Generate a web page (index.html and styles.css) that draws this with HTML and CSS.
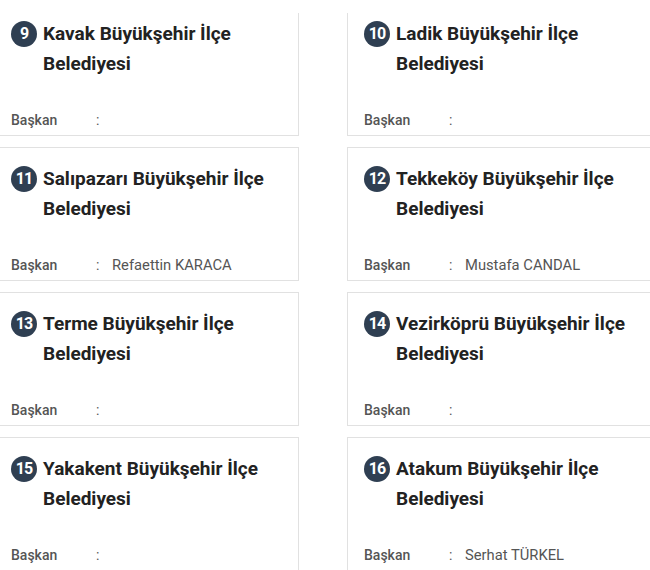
FILE: index.html
```html
<!DOCTYPE html>
<html lang="tr">
<head>
<meta charset="utf-8">
<link rel="stylesheet" href="styles.css">
</head>
<body>
<div class="top-cover"></div>
<div class="grid">
  <div class="card">
    <div class="title"><span class="badge">9</span><span class="name">Kavak Büyükşehir İlçe Belediyesi</span></div>
    <div class="meta"><span class="label">Başkan</span><span class="colon">:</span><span class="value"></span></div>
  </div>
  <div class="card">
    <div class="title"><span class="badge">10</span><span class="name">Ladik Büyükşehir İlçe Belediyesi</span></div>
    <div class="meta"><span class="label">Başkan</span><span class="colon">:</span><span class="value"></span></div>
  </div>
  <div class="card">
    <div class="title"><span class="badge">11</span><span class="name">Salıpazarı Büyükşehir İlçe Belediyesi</span></div>
    <div class="meta"><span class="label">Başkan</span><span class="colon">:</span><span class="value">Refaettin KARACA</span></div>
  </div>
  <div class="card">
    <div class="title"><span class="badge">12</span><span class="name">Tekkeköy Büyükşehir İlçe Belediyesi</span></div>
    <div class="meta"><span class="label">Başkan</span><span class="colon">:</span><span class="value">Mustafa CANDAL</span></div>
  </div>
  <div class="card">
    <div class="title"><span class="badge">13</span><span class="name">Terme Büyükşehir İlçe Belediyesi</span></div>
    <div class="meta"><span class="label">Başkan</span><span class="colon">:</span><span class="value"></span></div>
  </div>
  <div class="card">
    <div class="title"><span class="badge">14</span><span class="name">Vezirköprü Büyükşehir İlçe Belediyesi</span></div>
    <div class="meta"><span class="label">Başkan</span><span class="colon">:</span><span class="value"></span></div>
  </div>
  <div class="card">
    <div class="title"><span class="badge">15</span><span class="name">Yakakent Büyükşehir İlçe Belediyesi</span></div>
    <div class="meta"><span class="label">Başkan</span><span class="colon">:</span><span class="value"></span></div>
  </div>
  <div class="card">
    <div class="title"><span class="badge">16</span><span class="name">Atakum Büyükşehir İlçe Belediyesi</span></div>
    <div class="meta"><span class="label">Başkan</span><span class="colon">:</span><span class="value">Serhat TÜRKEL</span></div>
  </div>
</div>
</body>
</html>
```
FILE: styles.css
```css
html, body {
  margin: 0;
  padding: 0;
  background: #fff;
  overflow: hidden;
}
body {
  font-family: Roboto, "Liberation Sans", sans-serif;
}
.top-cover {
  position: fixed;
  top: 0;
  left: 0;
  right: 0;
  height: 13px;
  background: #fff;
  z-index: 2;
}
.grid {
  display: grid;
  grid-template-columns: 305px 305px;
  column-gap: 48px;
  row-gap: 11px;
  margin-left: -6px;
  margin-top: 2px;
}
.card {
  box-sizing: border-box;
  height: 134px;
  border: 1px solid #e1e1e1;
  background: #fff;
  padding: 16px 16px 5px 16px;
  display: flex;
  flex-direction: column;
  justify-content: space-between;
}
.title {
  display: flex;
  align-items: flex-start;
  gap: 6px;
}
.badge {
  flex: none;
  width: 26px;
  height: 26px;
  margin-top: 2px;
  border-radius: 50%;
  background: #2f3f52;
  color: #fff;
  font-size: 16px;
  font-weight: 700;
  line-height: 26px;
  text-align: center;
  letter-spacing: -1px;
}
.name {
  font-size: 19px;
  font-weight: 700;
  line-height: 30px;
  color: #222;
}
.meta {
  display: flex;
  align-items: baseline;
  font-size: 14px;
  line-height: 20px;
  color: #555;
}
.label {
  width: 85px;
  flex: none;
  font-weight: 500;
}
.colon {
  width: 16px;
  flex: none;
}
.value {
  font-size: 14.75px;
}
```
